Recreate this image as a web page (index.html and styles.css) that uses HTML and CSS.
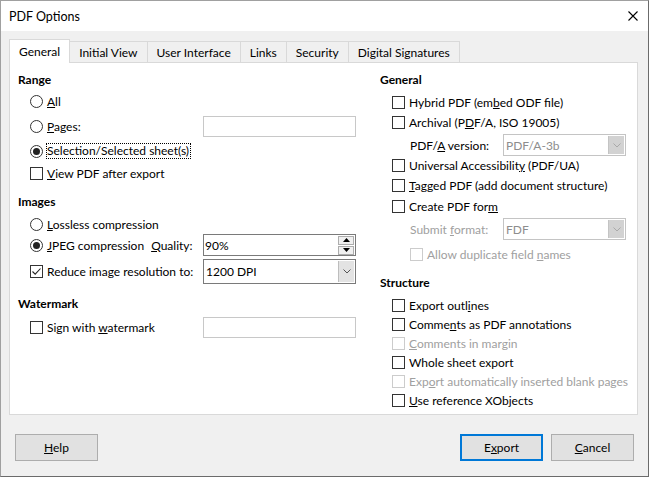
FILE: index.html
```html
<!DOCTYPE html>
<html lang="en">
<head>
<meta charset="utf-8">
<title>PDF Options</title>
<link rel="stylesheet" href="styles.css">
</head>
<body>
<div class="window">
  <div class="titlebar">
    <span class="title">PDF Options</span>
    <svg class="close" width="10" height="10" viewBox="0 0 10 10"><path d="M0.5 0.5 L9.5 9.5 M9.5 0.5 L0.5 9.5" stroke="#000" stroke-width="1.1" fill="none"/></svg>
  </div>
  <div class="content">
    <div class="tabs">
      <div class="tab active">General</div>
      <div class="tab">Initial View</div>
      <div class="tab">User Interface</div>
      <div class="tab">Links</div>
      <div class="tab">Security</div>
      <div class="tab">Digital Signatures</div>
    </div>
    <div class="panel">
      <div class="col">
        <div class="sec-title">Range</div>
        <div class="row opt mt2 h21"><span class="radio"></span><span class="lbl"><u>A</u>ll</span></div>
        <div class="row opt mt4 h21"><span class="radio"></span><span class="lbl"><u>P</u>ages:</span><span class="field"></span></div>
        <div class="row opt mt4 h20"><span class="radio on"></span><span class="lbl focus">Selection/Selected sheet(s)</span></div>
        <div class="row opt mt2 h20"><span class="box"></span><span class="lbl"><u>V</u>iew PDF after export</span></div>

        <div class="sec-title mt10">Images</div>
        <div class="row opt mt3 h20"><span class="radio"></span><span class="lbl"><u>L</u>ossless compression</span></div>
        <div class="row opt h22"><span class="radio on"></span><span class="lbl"><u>J</u>PEG compression</span><span class="lbl quality"><u>Q</u>uality:</span>
          <span class="spin"><span class="spin-text">90%</span><span class="spin-btns"><span class="spin-btn"><svg width="7" height="4" viewBox="0 0 7 4"><path d="M3.5 0 L7 4 L0 4 Z" fill="#000"/></svg></span><span class="spin-btn"><svg width="7" height="4" viewBox="0 0 7 4"><path d="M0 0 L7 0 L3.5 4 Z" fill="#000"/></svg></span></span></span>
        </div>
        <div class="row opt mt3 h25"><span class="box checked"><svg width="11" height="11" viewBox="0 0 11 11"><path d="M1.5 5.5 L4.2 8.2 L9.5 2.5" stroke="#222" stroke-width="1.1" fill="none"/></svg></span><span class="lbl">Reduce ima<u>g</u>e resolution to:</span>
          <span class="combo"><span class="combo-text">1200 DPI</span><span class="combo-btn"><svg width="8" height="5" viewBox="0 0 8 5"><path d="M0.5 0.5 L4 4 L7.5 0.5" stroke="#555" fill="none"/></svg></span></span>
        </div>

        <div class="sec-title mt11">Watermark</div>
        <div class="row opt mt4 h21"><span class="box"></span><span class="lbl">Sign with <u>w</u>atermark</span><span class="field"></span></div>
      </div>

      <div class="col">
        <div class="sec-title">General</div>
        <div class="row opt mt3 h20"><span class="box"></span><span class="lbl">Hybrid PDF (em<u>b</u>ed ODF file)</span></div>
        <div class="row opt h20"><span class="box"></span><span class="lbl">Archival (P<u>D</u>F/A, ISO 19005)</span></div>
        <div class="row sub mt2 h22"><span class="lbl">PDF/<u>A</u> version:</span>
          <span class="combo narrow disabled"><span class="combo-text">PDF/A-3b</span><span class="combo-btn"><svg width="8" height="5" viewBox="0 0 8 5"><path d="M0.5 0.5 L4 4 L7.5 0.5" stroke="#a9a9a9" fill="none"/></svg></span></span>
        </div>
        <div class="row opt h19"><span class="box"></span><span class="lbl">Universal Accessibilit<u>y</u> (PDF/UA)</span></div>
        <div class="row opt mt1 h19"><span class="box"></span><span class="lbl"><u>T</u>agged PDF (add document structure)</span></div>
        <div class="row opt mt2 h19"><span class="box"></span><span class="lbl">Create PDF for<u>m</u></span></div>
        <div class="row sub mt2 h22"><span class="lbl dim">Submit <u>f</u>ormat:</span>
          <span class="combo narrow disabled"><span class="combo-text">FDF</span><span class="combo-btn"><svg width="8" height="5" viewBox="0 0 8 5"><path d="M0.5 0.5 L4 4 L7.5 0.5" stroke="#a9a9a9" fill="none"/></svg></span></span>
        </div>
        <div class="row sub mt5 h19"><span class="box off"></span><span class="lbl dim">Allow duplicate field <u>n</u>ames</span></div>

        <div class="sec-title mt10">Structure</div>
        <div class="row opt mt4 h19"><span class="box"></span><span class="lbl">Export outl<u>i</u>nes</span></div>
        <div class="row opt h19"><span class="box"></span><span class="lbl">Comme<u>n</u>ts as PDF annotations</span></div>
        <div class="row opt h19"><span class="box off"></span><span class="lbl dim"><u>C</u>omments in margin</span></div>
        <div class="row opt h19"><span class="box"></span><span class="lbl">Whole sheet export</span></div>
        <div class="row opt h19"><span class="box off"></span><span class="lbl dim">Exp<u>o</u>rt automatically inserted blank pages</span></div>
        <div class="row opt h19"><span class="box"></span><span class="lbl"><u>U</u>se reference XObjects</span></div>
      </div>
    </div>
    <div class="footer">
      <button class="btn"><u>H</u>elp</button>
      <span class="spacer"></span>
      <button class="btn default">E<u>x</u>port</button>
      <button class="btn"><u>C</u>ancel</button>
    </div>
  </div>
</div>
</body>
</html>
```

FILE: styles.css
```css
html, body {
  margin: 0;
  padding: 0;
}
body {
  font-family: Lato, "Liberation Sans", sans-serif;
  font-size: 12px;
  color: #000;
  background: #f0f0f0;
}
.window {
  width: 649px;
  height: 477px;
  box-sizing: border-box;
  border: 1px solid #a0a0a0;
  border-right-color: #6b6b6b;
  border-bottom-color: #6b6b6b;
  background: #f0f0f0;
  display: flex;
  flex-direction: column;
}
.titlebar {
  height: 30px;
  flex: none;
  background: #fff;
  display: flex;
  align-items: center;
  justify-content: space-between;
  padding: 0 10px 0 8px;
}
.title {
  font-size: 12.5px;
}
.close {
  display: block;
}
.content {
  padding: 8px 10px 0 8px;
}
.tabs {
  display: flex;
  align-items: flex-end;
  height: 23px;
}
.tab {
  height: 21px;
  box-sizing: border-box;
  border: 1px solid #d9d9d9;
  border-left: none;
  border-bottom: none;
  padding: 0 9px;
  display: flex;
  align-items: center;
  background: #f0f0f0;
  white-space: nowrap;
}
.tab.active {
  height: 24px;
  margin-bottom: -1px;
  background: #fff;
  border-left: 1px solid #d9d9d9;
  position: relative;
  z-index: 1;
}
.panel {
  height: 353px;
  box-sizing: border-box;
  border: 1px solid #d9d9d9;
  background: #fff;
  padding: 8px 10px 0 8px;
  display: grid;
  grid-template-columns: 338px 246px;
  column-gap: 24px;
  align-items: start;
}
.col {
  display: flex;
  flex-direction: column;
}
.sec-title {
  height: 18px;
  line-height: 18px;
  font-weight: bold;
}
.row {
  display: flex;
  align-items: center;
  white-space: nowrap;
}
.opt { padding-left: 12px; }
.sub { padding-left: 30px; }
.h19 { height: 19px; }
.h20 { height: 20px; }
.h21 { height: 21px; }
.h22 { height: 22px; }
.h25 { height: 25px; }
.mt1 { margin-top: 1px; }
.mt2 { margin-top: 2px; }
.mt3 { margin-top: 3px; }
.mt4 { margin-top: 4px; }
.mt5 { margin-top: 5px; }
.mt10 { margin-top: 10px; }
.mt11 { margin-top: 11px; }

.radio, .box {
  width: 13px;
  height: 13px;
  box-sizing: border-box;
  border: 1px solid #333;
  background: #fff;
  margin-right: 4px;
  flex: none;
  display: flex;
  align-items: center;
  justify-content: center;
}
.radio { border-radius: 50%; }
.radio.on::after {
  content: "";
  width: 7px;
  height: 7px;
  border-radius: 50%;
  background: #222;
}
.box.off { border-color: #cccccc; }
.box svg { display: block; }
.lbl u { text-decoration: underline; text-underline-offset: 1px; }
.dim { color: #a0a0a0; }
.focus {
  border: 1px dotted #000;
  margin-left: -1px;
  padding-right: 1px;
  line-height: 14px;
}
.quality { margin-left: 7px; }

.field {
  margin-left: auto;
  width: 153px;
  height: 21px;
  box-sizing: border-box;
  border: 1px solid #c8c8c8;
  background: #fff;
}
.spin {
  margin-left: auto;
  width: 153px;
  height: 22px;
  box-sizing: border-box;
  border: 1px solid #7a7a7a;
  background: #fff;
  display: flex;
  align-items: center;
  padding-left: 1px;
}
.spin-btns {
  margin-left: auto;
  margin-right: 1px;
  display: flex;
  flex-direction: column;
  gap: 1px;
}
.spin-btn {
  width: 16px;
  height: 9px;
  box-sizing: border-box;
  border: 1px solid #adadad;
  background: #f0f0f0;
  display: flex;
  align-items: center;
  justify-content: center;
}
.spin-btn svg { display: block; }
.combo {
  margin-left: auto;
  width: 153px;
  height: 25px;
  box-sizing: border-box;
  border: 1px solid #7a7a7a;
  background: #fff;
  display: flex;
  padding: 1px;
}
.combo.narrow {
  width: 123px;
  height: 22px;
}
.combo-text {
  flex: 1;
  display: flex;
  align-items: center;
  padding-left: 1px;
}
.combo-btn {
  width: 16px;
  box-sizing: border-box;
  border-left: 1px solid #bdbdbd;
  background: #e3e3e3;
  display: flex;
  align-items: center;
  justify-content: center;
}
.combo-btn svg { display: block; }
.combo.disabled {
  border-color: #c4c4c4;
}
.combo.disabled .combo-text { color: #8d8d8d; }
.combo.disabled .combo-btn {
  background: #d2d2d2;
  border-left-color: #c4c4c4;
}

.footer {
  display: flex;
  gap: 8px;
  padding: 19px 4px 0 6px;
}
.spacer { flex: 1; }
.btn {
  width: 83px;
  height: 27px;
  box-sizing: border-box;
  border: 1px solid #adadad;
  background: #e1e1e1;
  font-family: inherit;
  font-size: 12px;
  color: #000;
  padding: 0;
}
.btn.default {
  border: 2px solid #0078d7;
}
```
